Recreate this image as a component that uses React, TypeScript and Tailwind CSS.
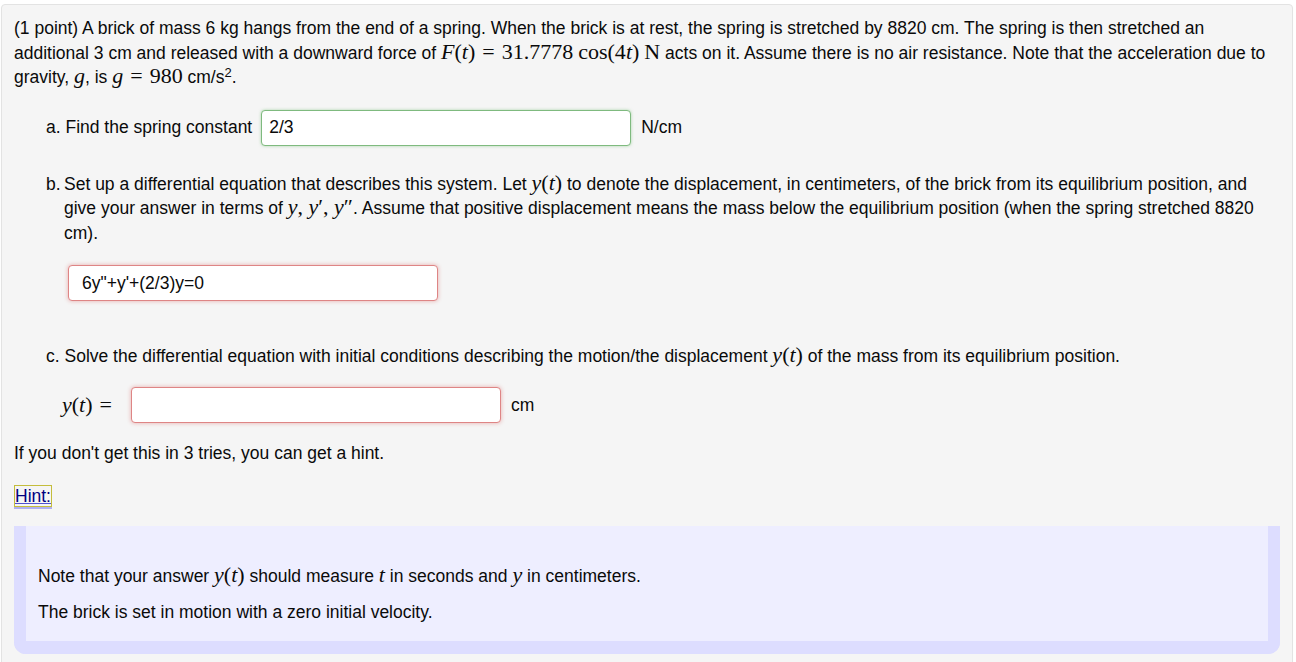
import React from 'react'

const M = ({ children, className = '' }: { children: React.ReactNode; className?: string }) => (
  <span className={`font-['Liberation_Serif','Times_New_Roman',serif] text-[22px] leading-[20px] ${className}`}>{children}</span>
)
const I = ({ children }: { children: React.ReactNode }) => <i className="italic">{children}</i>
const Eq = () => <span className="mx-[7px]">=</span>

export default function App() {
  return (
    <div className="min-h-[662px] bg-white pt-[4px] pl-[1px] font-['Liberation_Sans',Arial,sans-serif] text-[17.5px] text-[#0a0a0a]">
      <div className="w-[1292px] min-h-[680px] rounded-[4px] border border-[#e3e3e3] bg-[#f5f5f5] px-[12px] pt-[11px] shadow-[0_1px_1px_rgba(0,0,0,0.05)]">
        <p className="leading-[24.5px]">
          (1 point) A brick of mass 6 kg hangs from the end of a spring. When the brick is at rest, the spring is stretched by 8820 cm. The spring is then stretched an
          <br />
          additional 3 cm and released with a downward force of{' '}
          <M>
            <I>F</I>(<I>t</I>)<Eq />31.7778<span className="ml-[5px]">cos(4<I>t</I>)</span>
            <span className="ml-[5px]">N</span>
          </M>{' '}
          acts on it. Assume there is no air resistance. Note that the acceleration due to
          <br />
          gravity, <M><I>g</I></M>, is <M><I>g</I><Eq />980</M> cm/s<sup className="text-[13px]">2</sup>.
        </p>

        <div className="mt-[20px] flex items-center pl-[32px]">
          <span>a. Find the spring constant</span>
          <div className="ml-[9px] flex h-[36px] w-[370px] items-center rounded-[4px] border border-[#7fba7f] bg-white pl-[7px] shadow-[0_0_3px_rgba(92,184,92,0.5)]">
            2/3
          </div>
          <span className="ml-[10px]">N/cm</span>
        </div>

        <div className="mt-[26px] flex pl-[32px] leading-[24.5px]">
          <span className="w-[18px] shrink-0">b.</span>
          <p className="w-[1200px]">
            Set up a differential equation that describes this system. Let <M><I>y</I>(<I>t</I>)</M> to denote the displacement, in centimeters, of the brick from its equilibrium position, and give your answer in terms of{' '}
            <M>
              <I>y</I>, <I>y</I>′, <I>y</I>″
            </M>
            . Assume that positive displacement means the mass below the equilibrium position (when the spring stretched 8820 cm).
          </p>
        </div>

        <div className="mt-[20px] pl-[54px]">
          <div className="flex h-[36px] w-[370px] items-center rounded-[4px] border border-[#de8585] bg-white pl-[13px] shadow-[0_0_4px_rgba(217,83,79,0.45)]">
            6y"+y'+(2/3)y=0
          </div>
        </div>

        <p className="mt-[43px] pl-[32px] leading-[24px]">
          c. Solve the differential equation with initial conditions describing the motion/the displacement <M><I>y</I>(<I>t</I>)</M> of the mass from its equilibrium position.
        </p>

        <div className="mt-[19px] flex items-center pl-[48px]">
          <M className="w-[69px]">
            <I>y</I>(<I>t</I>)<Eq />
          </M>
          <div className="h-[36px] w-[370px] rounded-[4px] border border-[#de8585] bg-white shadow-[0_0_4px_rgba(217,83,79,0.45)]" />
          <span className="ml-[10px]">cm</span>
        </div>

        <p className="mt-[18px] leading-[24px]">If you don't get this in 3 tries, you can get a hint.</p>

        <div className="mt-[19px] leading-[24px]">
          <span className="border border-[#c4bd3c] text-[#00007f] underline decoration-[#5050d0] shadow-[0_2px_0_#b0b0f0]">Hint:</span>
        </div>

        <div className="mt-[18px] h-[128px] rounded-b-[12px] border-r-[12px] border-b-[13px] border-l-[12px] border-[#ddddff] bg-[#eeeeff] pl-[12px] pt-[38px]">
          <p className="leading-[24px]">
            Note that your answer <M><I>y</I>(<I>t</I>)</M> should measure <M><I>t</I></M> in seconds and <M><I>y</I></M> in centimeters.
          </p>
          <p className="mt-[12px] leading-[24px]">The brick is set in motion with a zero initial velocity.</p>
        </div>
      </div>
    </div>
  )
}
